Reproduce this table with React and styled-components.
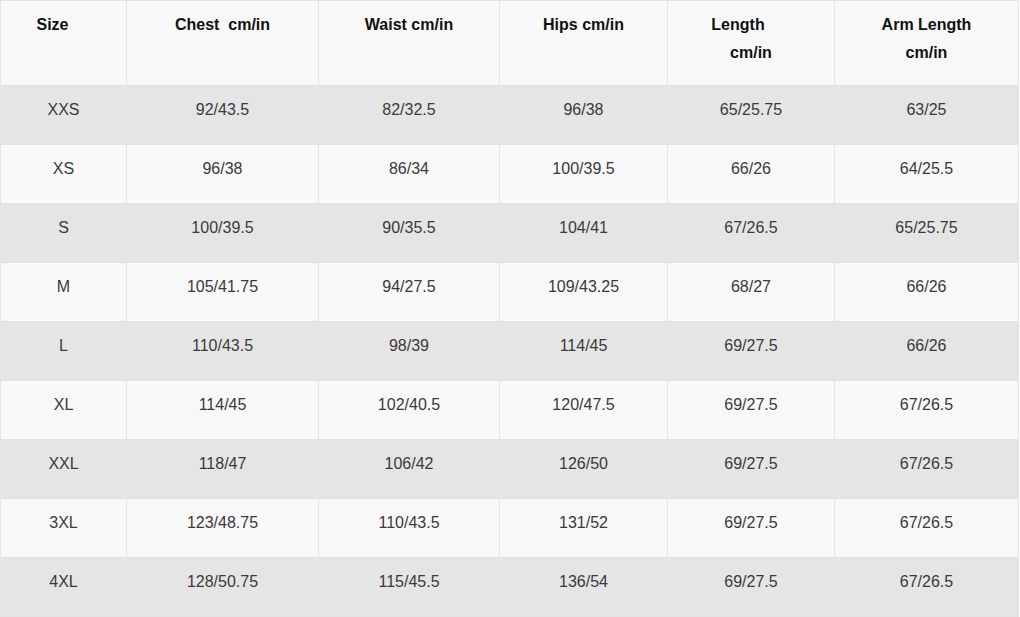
import React from "react";
import styled, { createGlobalStyle } from "styled-components";

const GlobalStyle = createGlobalStyle`
  html, body {
    margin: 0;
    padding: 0;
    background: #ffffff;
  }
  body {
    font-family: "Liberation Sans", Arial, Helvetica, sans-serif;
  }
`;

const COLS = "126px 192px 181px 168px 167px 184px";

const Table = styled.div`
  width: 1019px;
  border-top: 1px solid #e4e4e4;
  border-left: 1px solid #e4e4e4;
  box-sizing: border-box;
`;

const Row = styled.div`
  display: grid;
  grid-template-columns: ${COLS};
  height: ${({ $head }) => ($head ? "85px" : "59px")};
  background-color: ${({ $shade }) => ($shade ? "#e5e5e5" : "#f8f8f8")};
`;

const Cell = styled.div`
  box-sizing: border-box;
  border-right: 1px solid #e4e4e4;
  border-bottom: 1px solid #e4e4e4;
  padding-top: 10px;
  text-align: center;
  font-size: 16px;
  line-height: 28px;
  color: ${({ $head }) => ($head ? "#111111" : "#3a3a3a")};
  font-weight: ${({ $head }) => ($head ? 700 : 400)};
`;

// some header labels sit a bit left of centre in the source
const Label = styled.span`
  display: inline-block;
  padding-right: ${({ $shift }) => $shift || 0}px;
`;

const headers = [
  { lines: ["Size"], shift: 22 },
  { lines: ["Chest\u00a0 cm/in"] },
  { lines: ["Waist cm/in"] },
  { lines: ["Hips cm/in"] },
  { lines: ["Length", "cm/in"], shift: 26 },
  { lines: ["Arm Length", "cm/in"] },
];

const rows = [
  ["XXS", "92/43.5", "82/32.5", "96/38", "65/25.75", "63/25"],
  ["XS", "96/38", "86/34", "100/39.5", "66/26", "64/25.5"],
  ["S", "100/39.5", "90/35.5", "104/41", "67/26.5", "65/25.75"],
  ["M", "105/41.75", "94/27.5", "109/43.25", "68/27", "66/26"],
  ["L", "110/43.5", "98/39", "114/45", "69/27.5", "66/26"],
  ["XL", "114/45", "102/40.5", "120/47.5", "69/27.5", "67/26.5"],
  ["XXL", "118/47", "106/42", "126/50", "69/27.5", "67/26.5"],
  ["3XL", "123/48.75", "110/43.5", "131/52", "69/27.5", "67/26.5"],
  ["4XL", "128/50.75", "115/45.5", "136/54", "69/27.5", "67/26.5"],
];

const App = () => {
  return (
    <>
      <GlobalStyle />
      <Table>
        <Row $head>
          {headers.map((h, i) => (
            <Cell $head key={i}>
              <Label $shift={h.shift}>{h.lines[0]}</Label>
              {h.lines[1] && (
                <>
                  <br />
                  {h.lines[1]}
                </>
              )}
            </Cell>
          ))}
        </Row>
        {rows.map((r, i) => (
          <Row key={r[0]} $shade={i % 2 === 0}>
            {r.map((v, j) => (
              <Cell key={j}>{v}</Cell>
            ))}
          </Row>
        ))}
      </Table>
    </>
  );
};

export default App;
